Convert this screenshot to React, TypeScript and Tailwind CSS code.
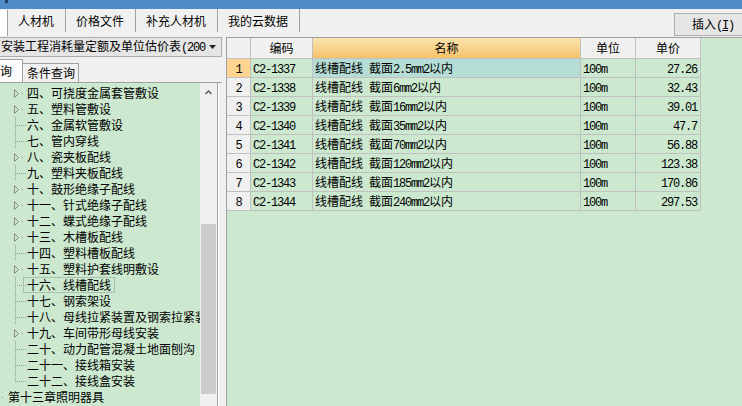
import React from 'react';

type NodeKind = 'exp' | 'leaf' | 'last' | 'root';

const treeItems: { text: string; kind: NodeKind; selected?: boolean }[] = [
  { text: '四、可挠度金属套管敷设', kind: 'exp' },
  { text: '五、塑料管敷设', kind: 'exp' },
  { text: '六、金属软管敷设', kind: 'leaf' },
  { text: '七、管内穿线', kind: 'leaf' },
  { text: '八、瓷夹板配线', kind: 'exp' },
  { text: '九、塑料夹板配线', kind: 'leaf' },
  { text: '十、鼓形绝缘子配线', kind: 'exp' },
  { text: '十一、针式绝缘子配线', kind: 'exp' },
  { text: '十二、蝶式绝缘子配线', kind: 'exp' },
  { text: '十三、木槽板配线', kind: 'exp' },
  { text: '十四、塑料槽板配线', kind: 'leaf' },
  { text: '十五、塑料护套线明敷设', kind: 'exp' },
  { text: '十六、线槽配线', kind: 'leaf', selected: true },
  { text: '十七、钢索架设', kind: 'leaf' },
  { text: '十八、母线拉紧装置及钢索拉紧装置', kind: 'leaf' },
  { text: '十九、车间带形母线安装', kind: 'exp' },
  { text: '二十、动力配管混凝土地面刨沟', kind: 'leaf' },
  { text: '二十一、接线箱安装', kind: 'leaf' },
  { text: '二十二、接线盒安装', kind: 'last' },
  { text: '第十三章照明器具', kind: 'root' },
];

const rows = [
  { code: 'C2-1337', name: '线槽配线 截面2.5mm2以内', price: '27.26' },
  { code: 'C2-1338', name: '线槽配线 截面6mm2以内', price: '32.43' },
  { code: 'C2-1339', name: '线槽配线 截面16mm2以内', price: '39.01' },
  { code: 'C2-1340', name: '线槽配线 截面35mm2以内', price: '47.7' },
  { code: 'C2-1341', name: '线槽配线 截面70mm2以内', price: '56.88' },
  { code: 'C2-1342', name: '线槽配线 截面120mm2以内', price: '123.38' },
  { code: 'C2-1343', name: '线槽配线 截面185mm2以内', price: '170.86' },
  { code: 'C2-1344', name: '线槽配线 截面240mm2以内', price: '297.53' },
];

// half-width runs look like SimSun's 6px ascii, cjk stays 12px
function Mixed({ text }: { text: string }) {
  const parts = text.match(/[\x00-\x7f]+|[^\x00-\x7f]+/g) ?? [];
  return (
    <>
      {parts.map((p, i) =>
        /^[\x00-\x7f]/.test(p) ? (
          <span key={i} className="font-['Liberation_Mono',monospace] text-[12px] tracking-[-1.2px]">
            {p}
          </span>
        ) : (
          <span key={i}>{p}</span>
        )
      )}
    </>
  );
}

function Connector({ kind }: { kind: NodeKind }) {
  if (kind === 'root') {
    return (
      <svg width="8" height="16" className="shrink-0">
        <rect x="2" y="8" width="1" height="1" fill="#909090" />
      </svg>
    );
  }
  return (
    <svg width="26" height="16" className="shrink-0">
      {kind === 'exp' ? (
        <>
          <path d="M14.5 4.5 L18.5 8.5 L14.5 12.5 Z" fill="none" stroke="#8a8a8a" strokeWidth="1" />
          <rect x="22" y="8" width="1" height="1" fill="#909090" />
        </>
      ) : (
        <>
          <line x1="15.5" y1="0" x2="15.5" y2={kind === 'last' ? 9 : 16} stroke="#9a9a9a" strokeDasharray="1 1" />
          <line x1="17" y1="8.5" x2="26" y2="8.5" stroke="#9a9a9a" strokeDasharray="1 1" />
        </>
      )}
    </svg>
  );
}

export default function App() {
  return (
    <div className="w-[742px] h-[406px] overflow-hidden bg-[#f0f0f0] text-[12px] text-black font-['Noto_Sans_CJK_SC',sans-serif] flex flex-col">
      {/* title strip */}
      <div className="h-[9px] shrink-0 bg-[#4f8bc8] flex">
        <div className="ml-[5px] w-[3px] h-[3px] bg-[#2a3f58]" />
      </div>

      {/* menu tabs */}
      <div className="h-[28px] shrink-0 flex items-start">
        <div className="w-[8px] h-[26px] mt-[1px] bg-white border-r border-[#a0a0a0]" />
        {['人材机', '价格文件', '补充人材机', '我的云数据'].map((t) => (
          <div key={t} className="h-[23px] pl-[10px] pr-[11px] border-r border-[#a0a0a0] leading-[23px]">
            {t}
          </div>
        ))}
        <button className="ml-auto -mr-[12px] mt-[4px] h-[23px] w-[80px] border border-[#adadad] bg-[#e6e6e6] text-left pl-[17px] leading-[20px]">
          插入<Mixed text="(" />
          <span className="font-['Liberation_Mono',monospace] text-[12px] tracking-[-1.2px] underline">I</span>
          <Mixed text=")" />
        </button>
      </div>

      <div className="flex-1 flex min-h-0">
        {/* left pane */}
        <div className="w-[222px] shrink-0 flex flex-col overflow-hidden">
          <div className="h-[20px] w-[223px] -ml-[1px] shrink-0 border border-[#acacac] bg-[#e5e5e5] flex items-center">
            <span className="flex-1 pl-[1px] leading-[18px] whitespace-nowrap overflow-hidden">
              <Mixed text="安装工程消耗量定额及单位估价表(200" />
            </span>
            <svg width="7" height="4" className="mr-[5px] shrink-0">
              <path d="M0 0 H7 L3.5 4 Z" fill="#222" />
            </svg>
          </div>

          <div className="h-[25px] shrink-0 flex items-end">
            <div className="h-[23px] w-[23px] bg-[#fbfbfb] border-t border-r border-[#a0a0a0] overflow-hidden leading-[21px] whitespace-nowrap">
              <span className="-ml-[12px] inline-block">查询</span>
            </div>
            <div className="h-[19px] w-[56px] border-t border-r border-[#a0a0a0] bg-[#f0f0f0] pl-[4px] leading-[18px]">
              条件查询
            </div>
          </div>

          <div className="flex-1 flex min-h-0 border-t border-[#a0a0a0]">
            <div className="w-[200px] shrink-0 bg-[#cce8cf] pt-[2px] overflow-hidden">
              {treeItems.map((it) => (
                <div key={it.text} className="h-[16px] flex items-center whitespace-nowrap">
                  <Connector kind={it.kind} />
                  {it.selected ? (
                    <span className="h-[16px] -ml-[3px] px-[3px] border border-[#a9c0aa] leading-[14px]">{it.text}</span>
                  ) : (
                    <span className={it.kind === 'root' ? 'leading-[16px]' : 'ml-[1px] leading-[16px]'}>{it.text}</span>
                  )}
                </div>
              ))}
            </div>
            <div className="w-[17px] shrink-0 bg-[#f0f0f0] flex flex-col">
              <svg width="17" height="5" className="mt-[7px] shrink-0">
                <path d="M5.5 4 L8.5 1 L11.5 4" fill="none" stroke="#555" strokeWidth="1.3" />
              </svg>
              <div className="mt-[129px] ml-[1px] w-[15px] h-[170px] bg-[#cdcdcd]" />
            </div>
            <div className="w-[1px] bg-[#a0a0a0]" />
            <div className="w-[1px] bg-white" />
          </div>
        </div>

        {/* splitter */}
        <div className="w-[4px] shrink-0" />

        {/* grid */}
        <div className="flex-1 bg-[#cce8cf] border-l border-t border-[#a0a0a0] overflow-hidden">
          <div className="flex h-[21px] leading-[20px] text-center">
            <div className="w-[24px] border-r border-b border-[#c0c0c0] bg-[#f0f0f0]" />
            <div className="w-[62px] border-r border-b border-[#c0c0c0] bg-[#f0f0f0]">编码</div>
            <div className="w-[268px] border-r border-b border-[#c0c0c0] bg-gradient-to-b from-[#fbe4ad] to-[#f4c269]">名称</div>
            <div className="w-[55px] border-r border-b border-[#c0c0c0] bg-[#f0f0f0]">单位</div>
            <div className="w-[65px] border-r border-b border-[#c0c0c0] bg-[#f0f0f0]">单价</div>
          </div>
          {rows.map((r, i) => (
            <div key={r.code} className="flex h-[19px] leading-[18px] whitespace-pre">
              <div
                className={
                  i === 0
                    ? 'w-[24px] border-r border-b border-[#c0c0c0] bg-[#fdd591] text-center'
                    : 'w-[24px] border-r border-b border-[#c0c0c0] bg-[#f0f0f0] text-center'
                }
              >
                <Mixed text={String(i + 1)} />
              </div>
              <div className="w-[62px] border-r border-b border-[#c0c0c0] pl-[2px]">
                <Mixed text={r.code} />
              </div>
              <div
                className={
                  i === 0
                    ? 'w-[268px] border-r border-b border-[#c0c0c0] bg-[#b5ddd5] pl-[2px]'
                    : 'w-[268px] border-r border-b border-[#c0c0c0] pl-[2px]'
                }
              >
                <Mixed text={r.name} />
              </div>
              <div className="w-[55px] border-r border-b border-[#c0c0c0] pl-[2px]">
                <Mixed text="100m" />
              </div>
              <div className="w-[65px] border-r border-b border-[#c0c0c0] pr-[3px] text-right">
                <Mixed text={r.price} />
              </div>
            </div>
          ))}
        </div>
      </div>
    </div>
  );
}
